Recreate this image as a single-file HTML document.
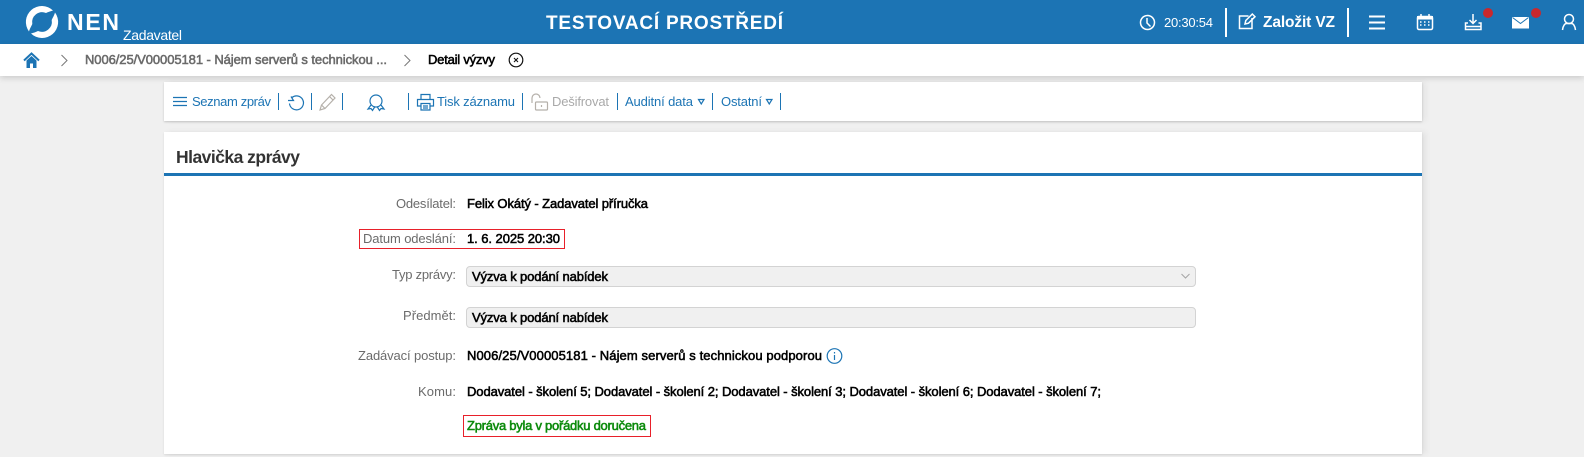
<!DOCTYPE html>
<html lang="cs"><head><meta charset="utf-8"><title>Detail výzvy</title>
<style>
html,body{margin:0;padding:0;width:1584px;height:457px;overflow:hidden;background:#f0f0f0}
.a{position:absolute}
svg{position:absolute;left:0;top:0}
text{font-family:"Liberation Sans",sans-serif;font-size:13px;white-space:pre}
.l{fill:#6b6b6b}
.v{fill:#000;stroke:#000;stroke-width:.55px;font-size:13px}
.b{fill:#1c74b4}
.ic{fill:none;stroke:#1c74b4;stroke-width:1.2}
.w{fill:none;stroke:#fff;stroke-width:1.5}
.g{fill:none;stroke:#b5b0aa;stroke-width:1.2}
</style></head><body>
<div class="a" style="left:0;top:0;width:1584px;height:44px;background:#1c74b4"></div>
<div class="a" style="left:0;top:44px;width:1584px;height:32px;background:#fff;box-shadow:0 2px 6px rgba(0,0,0,.16)"></div>
<div class="a" style="left:164px;top:82px;width:1258px;height:39px;background:#fff;box-shadow:0 1px 2px rgba(0,0,0,.18),4px 0 6px rgba(0,0,0,.05)"></div>
<div class="a" style="left:164px;top:132px;width:1258px;height:322px;background:#fff;box-shadow:4px 0 6px rgba(0,0,0,.06),0 1px 2px rgba(0,0,0,.1)"></div>
<div class="a" style="left:164px;top:173px;width:1258px;height:3px;background:#1c74b4"></div>
<div class="a" style="left:466px;top:266px;width:728px;height:19px;background:#f0f0f0;border:1px solid #d3d3d3;border-radius:4px"></div>
<div class="a" style="left:466px;top:307px;width:728px;height:19px;background:#f0f0f0;border:1px solid #d3d3d3;border-radius:4px"></div>
<div class="a" style="left:359px;top:229px;width:204px;height:18px;border:1px solid #e8202a"></div>
<div class="a" style="left:463px;top:415px;width:186px;height:20px;border:1px solid #e8202a"></div>

<svg width="1584" height="457" viewBox="0 0 1584 457">
<!-- logo -->
<path d="M53 10.500A16 16 0 0 0 29 31.500C30 28 31.500 26 32.300 24A10 10 0 0 1 46 13C48 12 51 11 53 10.500Z" fill="#fff"/>
<path d="M31 33.500A16 16 0 0 0 55 12.500C54 16 52.500 18 51.700 20A10 10 0 0 1 38 31C36 32 33 33 31 33.500Z" fill="#fff"/>
<text x="67" y="30" textLength="52" style="font-size:23px;font-weight:700" fill="#fff">NEN</text>
<text x="123" y="40" textLength="59" style="font-size:14px" fill="#fff">Zadavatel</text>
<text x="546" y="29" textLength="237" style="font-size:19px;font-weight:700" fill="#fff">TESTOVACÍ PROSTŘEDÍ</text>
<!-- header right -->
<circle cx="1147.500" cy="22.500" r="7" class="w"/><path d="M1147 18v5l3.500 3.500" class="w" stroke-width="1.300"/>
<text x="1164" y="27" textLength="49" fill="#fff">20:30:54</text>
<rect x="1225" y="8" width="2" height="29" fill="#fff"/>
<path d="M1252 18v10.500h-12.500v-12.500h9" class="w"/><path d="M1245 24l.8-3.500 6.500-6.500 2.700 2.700-6.500 6.500z" class="w" stroke-width="1.200"/>
<text x="1263" y="27" textLength="72" style="font-size:15.500px;font-weight:700" fill="#fff">Založit VZ</text>
<rect x="1347" y="8" width="2" height="29" fill="#fff"/>
<path d="M1369 16.500h16M1369 22.500h16M1369 28.500h16" fill="none" stroke="#fff" stroke-width="2"/>
<rect x="1417.500" y="16.500" width="15" height="13" rx="1.500" class="w"/><rect x="1417" y="16" width="16" height="3.500" fill="#fff"/><path d="M1421 14v3M1429 14v3" class="w"/>
<path d="M1420 22h1.500M1424 22h1.500M1428 22h1.500M1420 25h1.500M1424 25h1.500M1428 25h1.500" stroke="#fff" stroke-width="1.500" fill="none"/>
<path d="M1473 14v9M1469.500 20l3.500 3.500 3.500-3.500" class="w"/><path d="M1468 23h-2.500v6.500h15.500v-6.500h-2.500M1466 26.500h15" class="w"/>
<circle cx="1488" cy="13" r="5" fill="#c9282d"/>
<path d="M1512 17h17v11.500h-17z" fill="#fff"/><path d="M1512.500 17.500l8 6 8-6" fill="none" stroke="#1c74b4" stroke-width="1"/>
<circle cx="1536" cy="13" r="5" fill="#c9282d"/>
<circle cx="1569" cy="19" r="4.500" class="w"/><path d="M1562.500 30c.5-4.500 2.500-6.500 4-6.500h5c1.500 0 3.500 2 4 6.500" class="w"/>
<!-- breadcrumb -->
<path d="M24 60.500l7.500-7 7.500 7" fill="none" stroke="#1c74b4" stroke-width="2"/>
<path d="M26.500 60.500l5-4.500 5 4.500v7.500h-3.500v-4.500h-3v4.500h-3.500z" fill="#1c74b4"/>
<path d="M61.500 55l5.500 5.500-5.500 5.500M404.500 55l5.500 5.500-5.500 5.500" fill="none" stroke="#777" stroke-width="1"/>
<text x="85" y="64" textLength="302" style="font-size:13px;stroke:#6a6a6a;stroke-width:.55px" fill="#6a6a6a">N006/25/V00005181 - Nájem serverů s technickou ...</text>
<text x="428" y="64" textLength="67" class="v">Detail výzvy</text>
<circle cx="516" cy="60" r="6.800" fill="none" stroke="#111" stroke-width="1.200"/><path d="M514 58l4 4M518 58l-4 4" stroke="#111" stroke-width="1.100"/>
<!-- toolbar -->
<path d="M173 97.500h14M173 101.500h14M173 105.500h14" class="ic"/>
<text x="192" y="106" textLength="79" class="b">Seznam zpráv</text>
<g fill="#1c74b4"><rect x="278" y="93" width="1" height="17"/><rect x="311" y="93" width="1" height="17"/><rect x="342" y="93" width="1" height="17"/><rect x="408" y="93" width="1" height="17"/><rect x="522" y="93" width="1" height="17"/><rect x="617" y="93" width="1" height="17"/><rect x="712" y="93" width="1" height="17"/><rect x="780" y="93" width="1" height="17"/></g>
<path d="M292 97.500a7 7 0 1 1-2.500 6" class="ic"/><path d="M288 100.500h5.500l-2.500-4" class="ic" stroke-width="1"/>
<path d="M320 110l1.500-5 10-10.500 3.500 3.500-10 10.500z" class="g"/><path d="M329.500 96.500l3.500 3.500M321.500 105l3.500 3.500" class="g"/>
<circle cx="376" cy="101" r="6" class="ic"/><path d="M371 105l-3 4 3-.5 1.500 2 2.500-4M381 105l3 4-3-.5-1.500 2-2.500-4" class="ic" stroke-width="1"/>
<path d="M421 100v-5.500h9v5.500M421 106h-3.500v-6.500h16v6.500h-3.500M421 103.500h9v6.500h-9zM423 106h5M423 108h5" class="ic"/>
<text x="437" y="106" textLength="78" class="b">Tisk záznamu</text>
<path d="M532 103v-5a4 4 0 0 1 8 0" class="g"/><rect x="535.500" y="102" width="12" height="8" rx="1" class="g"/><path d="M541.500 105v2" class="g"/>
<text x="552" y="106" textLength="57" fill="#a9a9a9">Dešifrovat</text>
<text x="625" y="106" textLength="68" class="b">Auditní data</text>
<path d="M698.500 99.500h5.500l-2.750 4.500z" class="ic" stroke-width="1"/>
<text x="721" y="106" textLength="41" class="b">Ostatní</text>
<path d="M766.500 99.500h5.500l-2.750 4.500z" class="ic" stroke-width="1"/>
<!-- title -->
<text x="176" y="163" textLength="124" style="font-size:17.500px;font-weight:700" fill="#333">Hlavička zprávy</text>
<!-- form -->
<text x="396" y="208" textLength="60" class="l">Odesílatel:</text>
<text x="467" y="208" textLength="181" class="v">Felix Okátý - Zadavatel příručka</text>
<text x="363" y="243" textLength="93" class="l">Datum odeslání:</text>
<text x="467" y="243" textLength="93" class="v">1. 6. 2025 20:30</text>
<text x="392" y="279" textLength="64" class="l">Typ zprávy:</text>
<text x="472" y="281" textLength="136" class="v">Výzva k podání nabídek</text>
<path d="M1181.500 274l4 4 4-4" fill="none" stroke="#a5a5a5" stroke-width="1"/>
<text x="403" y="320" textLength="53" class="l">Předmět:</text>
<text x="472" y="322" textLength="136" class="v">Výzva k podání nabídek</text>
<text x="358" y="360" textLength="98" class="l">Zadávací postup:</text>
<text x="467" y="360" textLength="355" class="v">N006/25/V00005181 - Nájem serverů s technickou podporou</text>
<circle cx="834.500" cy="356" r="7.300" class="ic"/><path d="M834.500 355v5M834.500 352v1.500" class="ic" stroke-width="1.400"/>
<text x="418" y="396" textLength="38" class="l">Komu:</text>
<text x="467" y="396" textLength="634" class="v">Dodavatel - školení 5; Dodavatel - školení 2; Dodavatel - školení 3; Dodavatel - školení 6; Dodavatel - školení 7;</text>
<text x="467" y="430" textLength="179" class="v" style="fill:#0b8a0b;stroke:#0b8a0b">Zpráva byla v pořádku doručena</text>
</svg>
</body></html>
